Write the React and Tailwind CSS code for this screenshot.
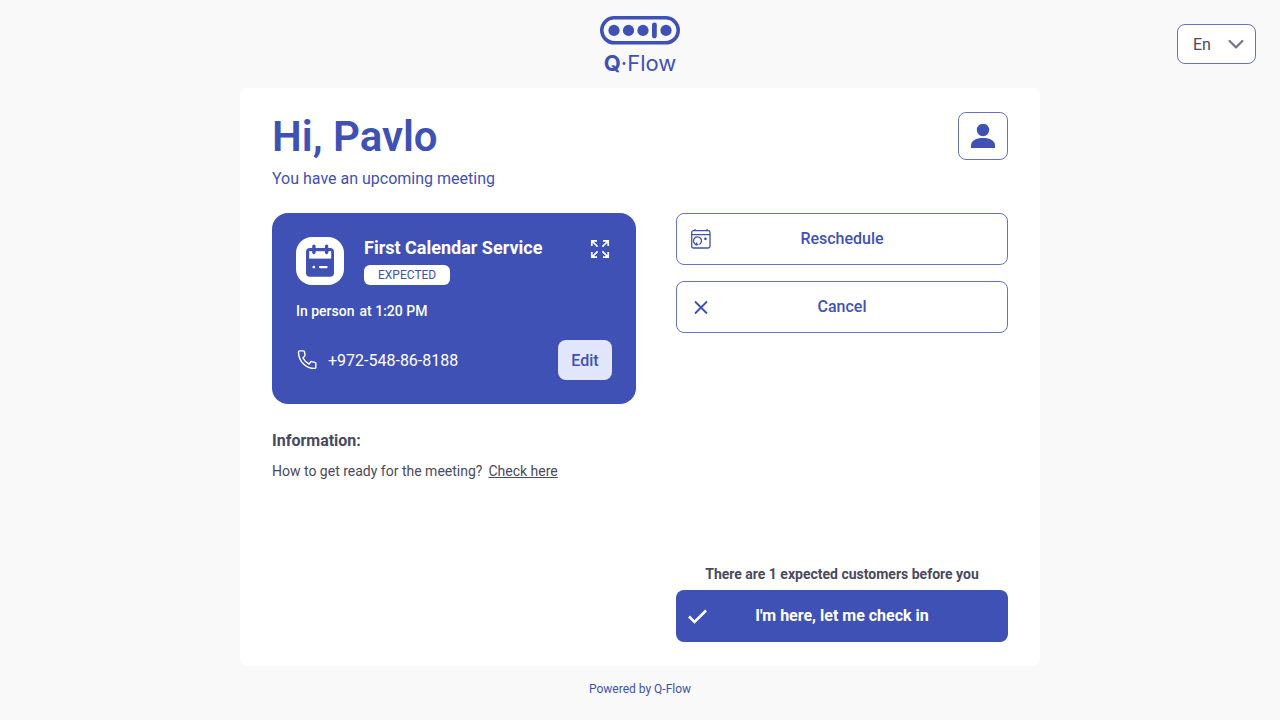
import React from "react";

function Logo() {
  return (
    <div className="flex flex-col items-center text-[#3f51b5]">
      <svg width="80" height="30" viewBox="0 0 80 30" aria-hidden="true">
        <rect x="1.8" y="2.8" width="76.4" height="25" rx="12.5" fill="none" stroke="currentColor" strokeWidth="3.6" />
        <g fill="currentColor">
          <circle cx="14" cy="15.4" r="5.6" />
          <circle cx="28.5" cy="15.4" r="5.6" />
          <circle cx="43" cy="15.4" r="5.6" />
          <rect x="52" y="7.4" width="4.8" height="16" rx="2.4" />
          <circle cx="66" cy="15.4" r="5.6" />
        </g>
      </svg>
      <span className="mt-1 font-['Inter',sans-serif] text-[22px] leading-7">
        <b className="font-bold">Q</b>
        <span className="font-normal">·Flow</span>
      </span>
    </div>
  );
}

function LanguageSelect() {
  return (
    <div className="relative w-[79px]">
      <select
        aria-label="Language"
        defaultValue="en"
        className="h-10 w-full appearance-none rounded-lg border border-[#6573c6] bg-white pt-0.5 pl-[15px] text-base text-[#4a4a5e]"
      >
        <option value="en">En</option>
      </select>
      <svg className="pointer-events-none absolute top-3 right-3 text-[#77748f]" width="16" height="16" viewBox="0 0 16 16" fill="none" stroke="currentColor" strokeWidth="2.2" strokeLinecap="round" strokeLinejoin="round" aria-hidden="true">
        <path d="M1.6 5 8 11.4 14.4 5" />
      </svg>
    </div>
  );
}

function ServiceIcon() {
  return (
    <svg className="shrink-0" width="48" height="48" viewBox="0 0 48 48" aria-hidden="true">
      <rect width="48" height="48" rx="16" fill="#fff" />
      <rect x="10" y="11" width="28" height="28.8" rx="4" fill="#3f51b5" />
      <path d="M13.2 14.200h22v7.400h-22z" fill="#fff" />
      <g strokeLinecap="round">
        <path d="M17.900 9.300v6.200M30.600 9.300v6.200" stroke="#3f51b5" strokeWidth="3.400" />
        <path d="M24 30.100h6.600" stroke="#fff" strokeWidth="2.200" />
      </g>
      <circle cx="17.800" cy="30.100" r="1.400" fill="#fff" />
    </svg>
  );
}

function ExpandIcon() {
  return (
    <svg width="24" height="24" viewBox="0 0 24 24" fill="none" stroke="currentColor" strokeWidth="1.7" aria-hidden="true">
      <path d="M9 3.800H3.800V9M4 4l5.600 5.600M15 3.800h5.200V9M20 4l-5.600 5.600M9 20.200H3.800V15M4 20l5.600-5.600M15 20.200h5.200V15M20 20l-5.600-5.600" />
    </svg>
  );
}

function PhoneIcon() {
  return (
    <svg width="24" height="24" viewBox="0 0 24 24" fill="none" stroke="currentColor" strokeWidth="1.4" strokeLinejoin="round" aria-hidden="true">
      <path d="M3.500 2.900h3.900c.5 0 .9.300 1 .8l.6 3.500c.1.500 0 .8-.4 1.100L6.900 9.800c1.300 2.700 3.300 4.900 6.200 6.200l1.500-2c.3-.4.700-.5 1.100-.4l3.300.8c.5.100.8.500.8 1v4c0 .6-.4 1-1 1C9.600 20.400 2.700 13.300 2.500 3.900c0-.6.400-1 1-1z" />
    </svg>
  );
}

function RescheduleIcon() {
  return (
    <svg width="24" height="24" viewBox="0 0 24 24" fill="none" stroke="currentColor" strokeWidth="1.3" aria-hidden="true">
      <rect x="2.700" y="3.700" width="18.300" height="17.300" rx="1.800" />
      <path d="M3 7.700h18M6 3.400V2M18 3.400V2" />
      <path d="M7.300 17.700A4 4 0 1 1 10.200 17.500" />
      <path d="M7.700 15.600v2.900M6.300 17.700h2.900" />
      <circle cx="16.400" cy="11.800" r="1.400" fill="currentColor" stroke="none" />
    </svg>
  );
}

function CloseIcon() {
  return (
    <svg width="24" height="24" viewBox="0 0 24 24" fill="none" stroke="currentColor" strokeWidth="1.9" aria-hidden="true">
      <path d="m6 6.500 12 12M18 6.500l-12 12" />
    </svg>
  );
}

function CheckIcon() {
  return (
    <svg width="24" height="24" viewBox="0 0 24 24" fill="none" stroke="currentColor" strokeWidth="2.500" aria-hidden="true">
      <path d="m3 12.500 5.500 5.500L20 6.500" />
    </svg>
  );
}

function ActionButton({ icon, children }) {
  return (
    <button type="button" className="grid h-[52px] w-full grid-cols-[24px_1fr_24px] items-center rounded-lg border border-[#6573c6] bg-white px-3 text-base font-medium text-[#3f51b5]">
      {icon}
      <span>{children}</span>
    </button>
  );
}

export default function App() {
  return (
    <div className="flex min-h-screen flex-col bg-[#f9f9f9] font-['Roboto',sans-serif] text-[#4a4a5e]">
      <header className="grid grid-cols-[1fr_auto_1fr] items-start px-6 pt-[15px] pb-[11px]">
        <div className="col-start-2">
          <Logo />
        </div>
        <div className="flex justify-end pt-[9px]">
          <LanguageSelect />
        </div>
      </header>

      <main className="mx-auto flex w-full max-w-[800px] flex-1 flex-col rounded-lg bg-white px-8 py-6">
        <div className="flex items-start justify-between text-[#3f51b5]">
          <div>
            <h1 className="text-[42px] leading-[50px] font-semibold">Hi, Pavlo</h1>
            <p className="mt-[5px] text-base">You have an upcoming meeting</p>
          </div>
          <button type="button" aria-label="Profile" className="flex h-12 w-[50px] items-center justify-center rounded-lg border border-[#6573c6] bg-white">
            <svg width="24" height="24" viewBox="0 0 24 24" fill="currentColor" aria-hidden="true">
              <circle cx="12" cy="6" r="6.200" />
              <path d="M0 24v-2.500C0 16.500 5 14 12 14s12 2.500 12 7.500V24z" />
            </svg>
          </button>
        </div>

        <div className="mt-[22px] grid flex-1 grid-cols-[364fr_332fr] gap-10">
          <div>
            <section className="rounded-2xl bg-[#3f51b5] p-6 text-white">
              <div className="flex items-start">
                <ServiceIcon />
                <div className="ml-5 flex-1">
                  <h2 className="text-lg leading-[22px] font-bold">First Calendar Service</h2>
                  <span className="mt-1.5 inline-block h-5 rounded-md bg-white px-3.5 align-top text-xs leading-5 text-[#3f51b5]">EXPECTED</span>
                </div>
                <button type="button" aria-label="Expand">
                  <ExpandIcon />
                </button>
              </div>
              <p className="mt-4 flex gap-[5px] text-sm font-medium">
                <span>In person</span>
                <span>at 1:20 PM</span>
              </p>
              <div className="mt-[19px] flex items-center">
                <PhoneIcon />
                <span className="ml-2 flex-1 pt-0.5 text-base">+972-548-86-8188</span>
                <button type="button" className="h-10 w-[54px] rounded-lg bg-[#e2e6fd] pt-0.5 text-base font-medium text-[#3f51b5]">Edit</button>
              </div>
            </section>
            <section className="mt-[25px]">
              <h3 className="text-base font-bold">Information:</h3>
              <p className="mt-2 text-sm">
                How to get ready for the meeting?
                <a href="#prepare" className="ml-1.5 underline">Check here</a>
              </p>
            </section>
          </div>

          <div className="flex flex-col gap-4">
            <ActionButton icon={<RescheduleIcon />}>Reschedule</ActionButton>
            <ActionButton icon={<CloseIcon />}>Cancel</ActionButton>
            <div className="mt-auto text-center">
              <p className="mb-1.5 text-sm font-bold">There are 1 expected customers before you</p>
              <button type="button" className="grid h-[52px] w-full grid-cols-[24px_1fr_24px] items-center rounded-lg bg-[#3f51b5] px-2.5 text-base font-bold text-white">
                <CheckIcon />
                <span>I'm here, let me check in</span>
              </button>
            </div>
          </div>
        </div>
      </main>

      <footer className="pt-[15px] pb-[23px] text-center text-xs text-[#3f51b5]">Powered by Q-Flow</footer>
    </div>
  );
}
